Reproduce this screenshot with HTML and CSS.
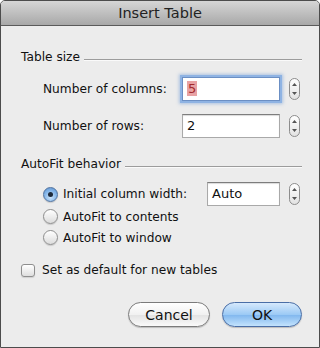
FILE: index.html
```html
<!DOCTYPE html>
<html lang="en">
<head>
    <meta charset="UTF-8">
    <meta name="viewport" content="width=device-width, initial-scale=1.0">
    <title>Insert Table</title>
    <link rel="stylesheet" href="styles.css">
</head>
<body>
    <div class="window">
        <div class="title-bar">Insert Table</div>

        <div class="content">
            <div class="group-head">
                <span>Table size</span>
                <span class="rule"></span>
            </div>

            <div class="field-row first">
                <label class="field-label">Number of columns:</label>
                <div class="text-box focused"><span class="selected">5</span></div>
                <div class="stepper">
                    <svg width="5" height="16" viewBox="0 0 5 16"><path d="M2.5 2 L5 5 L0 5 Z M2.5 14 L5 11 L0 11 Z" fill="#555"/></svg>
                </div>
            </div>

            <div class="field-row">
                <label class="field-label">Number of rows:</label>
                <div class="text-box">2</div>
                <div class="stepper">
                    <svg width="5" height="16" viewBox="0 0 5 16"><path d="M2.5 2 L5 5 L0 5 Z M2.5 14 L5 11 L0 11 Z" fill="#555"/></svg>
                </div>
            </div>

            <div class="group-head autofit">
                <span>AutoFit behavior</span>
                <span class="rule"></span>
            </div>

            <div class="width-row">
                <label class="radio-label"><span class="radio checked"></span>Initial column width:</label>
                <div class="text-box">Auto</div>
                <div class="stepper">
                    <svg width="5" height="16" viewBox="0 0 5 16"><path d="M2.5 2 L5 5 L0 5 Z M2.5 14 L5 11 L0 11 Z" fill="#555"/></svg>
                </div>
            </div>
            <div class="radio-row">
                <label class="radio-label"><span class="radio"></span>AutoFit to contents</label>
            </div>
            <div class="radio-row">
                <label class="radio-label"><span class="radio"></span>AutoFit to window</label>
            </div>

            <div class="check-row">
                <span class="checkbox"></span>Set as default for new tables
            </div>

            <div class="buttons">
                <button class="btn">Cancel</button>
                <button class="btn default">OK</button>
            </div>
        </div>
    </div>
</body>
</html>
```

FILE: styles.css
```css
body {
    margin: 0;
    background: #fff;
    font-family: 'DejaVu Sans', Verdana, sans-serif;
    font-size: 12.2px;
    color: #111;
}
.window {
    width: 320px;
    height: 348px;
    box-sizing: border-box;
    border: 1px solid #4c4c4c;
    border-radius: 5px 5px 0 0;
    background-color: #ececec;
    overflow: hidden;
}
.title-bar {
    height: 24px;
    line-height: 25px;
    text-align: center;
    font-size: 14.5px;
    color: #222;
    background: linear-gradient(#d6d6d6, #a8a8a8);
    border-bottom: 1px solid #5a5a5a;
}
.content {
    padding: 23px 17px 0 20px;
}
.group-head {
    display: flex;
    align-items: center;
    gap: 4px;
    height: 16px;
}
.group-head .rule {
    flex: 1;
    height: 1px;
    margin-top: 5px;
    background-color: #9c9c9c;
    box-shadow: 0 1px 0 #fafafa;
}
.group-head.autofit {
    margin-top: 18px;
}
.field-row, .width-row {
    display: grid;
    grid-template-columns: minmax(0, 1fr) 98px 11px;
    column-gap: 9px;
    align-items: center;
    height: 24px;
    padding-right: 2px;
    margin-top: 13px;
    white-space: nowrap;
}
.field-row.first {
    margin-top: 12px;
}
.width-row {
    grid-template-columns: minmax(0, 1fr) 73px 11px;
    margin-top: 10px;
}
.field-label {
    padding-left: 22px;
}
.text-box {
    height: 24px;
    box-sizing: border-box;
    background-color: #fff;
    border: 1px solid #a9a9a9;
    border-top-color: #7d7d7d;
    box-shadow: inset 0 1px 1px rgba(0, 0, 0, 0.15);
    padding: 3px 4px;
    line-height: 16px;
    font-size: 13px;
}
.text-box.focused {
    border-color: #6b8fc4;
    box-shadow: 0 0 0 2px #8fb3e3, 0 0 3px 3px rgba(110, 155, 215, 0.5);
}
.selected {
    background-color: #e8a2a4;
    color: #a32a2e;
    padding: 0 1px;
}
.stepper {
    width: 11px;
    height: 22px;
    box-sizing: border-box;
    border: 1px solid #8d8d8d;
    border-radius: 6px;
    background: linear-gradient(#ffffff, #e2e2e2);
    display: flex;
    align-items: center;
    justify-content: center;
}
.radio-row {
    height: 21px;
    display: flex;
    align-items: center;
}
.radio-label {
    display: flex;
    align-items: center;
    gap: 5px;
    padding-left: 22px;
}
.radio {
    width: 15px;
    height: 15px;
    box-sizing: border-box;
    border-radius: 50%;
    border: 1px solid #8e8e8e;
    background: linear-gradient(#ffffff, #dcdcdc);
    box-shadow: 0 1px 1px rgba(0, 0, 0, 0.15);
    display: flex;
    align-items: center;
    justify-content: center;
}
.radio.checked {
    border-color: #50729f;
    background: radial-gradient(circle at 50% 70%, #cbe4fb, #7eb1e6 60%, #5d8fcb);
}
.radio.checked::after {
    content: '';
    width: 5px;
    height: 5px;
    border-radius: 50%;
    background-color: #1d2a3a;
}
.check-row {
    display: flex;
    align-items: center;
    gap: 7px;
    height: 16px;
    margin-top: 14px;
}
.checkbox {
    width: 14px;
    height: 13px;
    box-sizing: border-box;
    border: 1px solid #8e8e8e;
    border-radius: 3px;
    background: linear-gradient(#ffffff, #dedede);
    box-shadow: 0 1px 1px rgba(0, 0, 0, 0.12);
}
.buttons {
    display: flex;
    justify-content: flex-end;
    gap: 12px;
    margin-top: 24px;
}
.btn {
    width: 82px;
    height: 25px;
    border: 1px solid #7b7b7b;
    border-radius: 13px;
    background: linear-gradient(#ffffff, #f1f1f1 50%, #e2e2e2 51%, #fafafa);
    font-family: 'DejaVu Sans', Verdana, sans-serif;
    font-size: 14px;
    color: #111;
    padding: 0;
    box-shadow: 0 1px 1px rgba(0, 0, 0, 0.2);
}
.btn.default {
    width: 80px;
    border-color: #4a6ea6;
    background: linear-gradient(#d6e9fc, #9ccaf5 50%, #7fb6ee 51%, #c3e3fd);
}
```
